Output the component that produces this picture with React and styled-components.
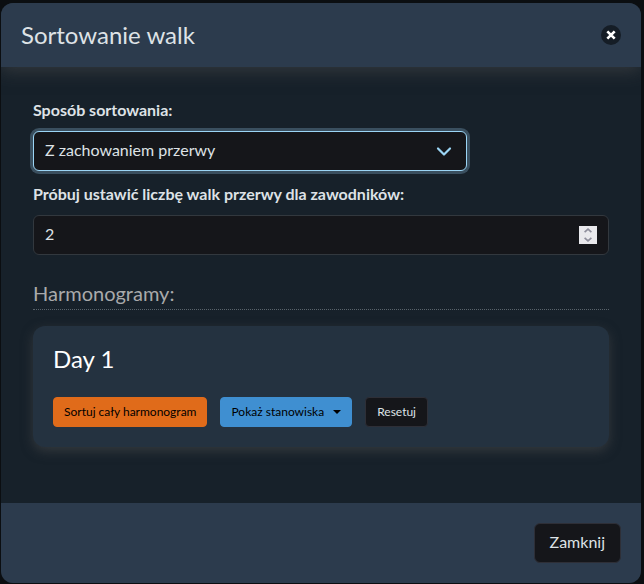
import React, { useState } from 'react'
import styled, { createGlobalStyle, css } from 'styled-components'

const GlobalStyle = createGlobalStyle`
  *, *::before, *::after { box-sizing: border-box; }
  body {
    margin: 0;
    background: #0b0e11;
    color: #dee2e6;
    font-family: Lato, "Noto Sans", sans-serif;
    font-size: 16px;
    line-height: 24px;
  }
  button, input, select { font: inherit; }
`

const Dialog = styled.section`
  margin: 3px 3px 1px 1px;
  border-radius: 12px;
  overflow: hidden;
  background: #17212a;
`

const Header = styled.header`
  position: relative;
  display: flex;
  align-items: center;
  justify-content: space-between;
  padding: 16px 20px;
  background: #2c3b4d;
  box-shadow: 0 4px 16px rgba(80, 80, 80, .5);
`

const Title = styled.h1`
  margin: 0;
  font-size: 24px;
  font-weight: 400;
  line-height: 32px;
`

const CloseButton = styled.button`
  display: flex;
  align-items: center;
  justify-content: center;
  width: 20px;
  height: 20px;
  padding: 0;
  border: none;
  border-radius: 50%;
  background: #151d26;
  color: #fff;
`

const Body = styled.div`
  padding: 32px 32px 56px;
`

const Label = styled.label`
  display: block;
  margin-bottom: 10px;
  font-weight: 700;
  line-height: 22px;
`

const Field = styled.div`
  position: relative;
  display: flex;
  align-items: center;
  max-width: ${({ $width }) => $width || 'none'};
  margin-bottom: 12px;
`

const control = css`
  appearance: none;
  width: 100%;
  height: 40px;
  padding: 0 11px 2px;
  border: 1px solid #32383e;
  border-radius: 6px;
  outline: none;
  background: #15161a;
  color: #dee2e6;
`

const Select = styled.select`
  ${control}
  border-color: #9bd5f5;
  box-shadow: 0 0 0 3px #3a4f5f;
`

const Chevron = styled.svg`
  position: absolute;
  right: 15px;
  pointer-events: none;
`

const NumberInput = styled.input`
  ${control}
  appearance: textfield;
  padding-bottom: 4px;

  &::-webkit-inner-spin-button { appearance: none; margin: 0; }
`

const Spinner = styled.div`
  position: absolute;
  right: 12px;
  display: grid;
  width: 18px;
  height: 18px;
  background: #e9e9ed;
`

const Step = styled.button`
  display: flex;
  align-items: center;
  justify-content: center;
  height: 9px;
  padding: 0;
  border: none;
  background: none;
  color: #8f8f9d;
`

const SectionTitle = styled.h2`
  margin: 26px 0 16px;
  padding-bottom: 4px;
  border-bottom: 1px dotted #59636b;
  color: #a9aaab;
  font-size: 20px;
  font-weight: 400;
  line-height: 24px;
`

const Card = styled.article`
  padding: 20px;
  border-radius: 12px;
  background: #243240;
  box-shadow: 0 4px 12px rgba(80, 80, 80, .5);
`

const CardTitle = styled.h3`
  margin: 0 0 26px;
  color: #fff;
  font-size: 24px;
  font-weight: 400;
  line-height: 25px;
`

const Actions = styled.div`
  display: flex;
  gap: 13px;
`

const variants = {
  orange: css`
    border-color: #e06b1a;
    background: #e06b1a;
    color: #000;
  `,
  blue: css`
    border-color: #3f8fd1;
    background: #3f8fd1;
    color: #000;
  `,
  dark: css`
    padding: 0 11px;
    border-color: #2e2f37;
    background: #15161a;
    color: #dee2e6;
  `,
}

const Button = styled.button`
  display: inline-flex;
  align-items: center;
  gap: 9px;
  height: 30px;
  padding: 0 10px;
  border: 1px solid;
  border-radius: 4px;
  font-size: 12px;
  white-space: nowrap;
  ${({ $variant }) => variants[$variant]}
`

const Footer = styled.footer`
  display: flex;
  justify-content: flex-end;
  padding: 20px;
  background: #2c3b4d;
`

const FooterButton = styled(Button)`
  height: 40px;
  padding: 0 15px 2px;
  border-radius: 6px;
  font-size: 16px;
`

export default function App() {
  const [gap, setGap] = useState(2)

  return <>
    <GlobalStyle />
    <Dialog role="dialog" aria-labelledby="dialog-title">
      <Header>
        <Title id="dialog-title">Sortowanie walk</Title>
        <CloseButton type="button" aria-label="Zamknij">
          <svg width="10" height="10" viewBox="0 0 10 10" fill="none" stroke="currentColor" strokeWidth="2.6">
            <path d="M1.3 1.3l7.4 7.4M8.7 1.3L1.3 8.7" />
          </svg>
        </CloseButton>
      </Header>

      <Body>
        <Label htmlFor="sort-mode">Sposób sortowania:</Label>
        <Field $width="434px">
          <Select id="sort-mode">
            <option>Z zachowaniem przerwy</option>
          </Select>
          <Chevron width="16" height="16" viewBox="0 0 16 16" fill="none" stroke="#9bd5f5" strokeWidth="2.2" strokeLinecap="round" strokeLinejoin="round">
            <path d="M2 5.5l6 6 6-6" />
          </Chevron>
        </Field>

        <Label htmlFor="gap">Próbuj ustawić liczbę walk przerwy dla zawodników:</Label>
        <Field>
          <NumberInput id="gap" type="number" value={gap} onChange={e => setGap(e.target.value)} />
          <Spinner>
            <Step type="button" aria-label="+" onClick={() => setGap(Number(gap) + 1)}>
              <svg width="8" height="5" viewBox="0 0 8 5" fill="none" stroke="currentColor" strokeWidth="1.7">
                <path d="M.6 4.2L4 1.2l3.4 3" />
              </svg>
            </Step>
            <Step type="button" aria-label="-" onClick={() => setGap(Number(gap) - 1)}>
              <svg width="8" height="5" viewBox="0 0 8 5" fill="none" stroke="currentColor" strokeWidth="1.7">
                <path d="M.6 .8l3.4 3 3.4-3" />
              </svg>
            </Step>
          </Spinner>
        </Field>

        <SectionTitle>Harmonogramy:</SectionTitle>
        <Card>
          <CardTitle>Day 1</CardTitle>
          <Actions>
            <Button type="button" $variant="orange">Sortuj cały harmonogram</Button>
            <Button type="button" $variant="blue">
              Pokaż stanowiska
              <svg width="8" height="4" viewBox="0 0 8 4" fill="currentColor"><path d="M0 0h8L4 4z" /></svg>
            </Button>
            <Button type="button" $variant="dark">Resetuj</Button>
          </Actions>
        </Card>
      </Body>

      <Footer>
        <FooterButton type="button" $variant="dark">Zamknij</FooterButton>
      </Footer>
    </Dialog>
  </>
}
